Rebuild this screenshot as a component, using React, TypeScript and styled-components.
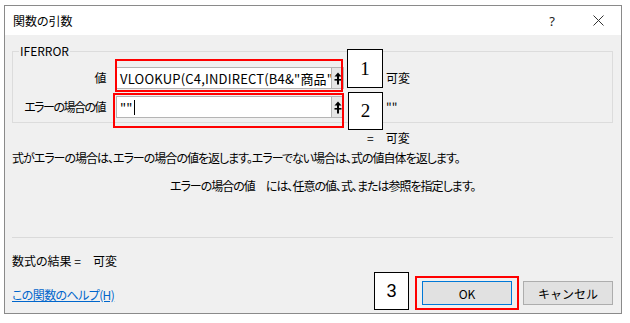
import React from 'react';
import styled, {createGlobalStyle} from 'styled-components';

const GlobalStyle = createGlobalStyle`
  html, body {
    margin: 0;
    padding: 0;
    background: #ffffff;
  }
  body {
    font-family: "Noto Sans CJK JP", "Noto Sans", sans-serif;
    font-size: 12px;
    color: #000000;
    font-feature-settings: "palt";
  }
`;

const Stage = styled.div`
  position: relative;
  width: 630px;
  height: 323px;
  overflow: hidden;
`;

const Window = styled.div`
  box-sizing: border-box;
  width: 618px;
  height: 309px;
  margin: 5px 0 0 4px;
  border: 1px solid #8a8a8a;
  background: #f0f0f0;
  display: flex;
  flex-direction: column;
`;

const TitleBar = styled.div`
  height: 29px;
  flex: none;
  background: #ffffff;
  display: flex;
  align-items: center;
  padding-left: 8px;
`;

const TitleText = styled.div`
  flex: 1;
  font-size: 12px;
  line-height: 14px;
`;

const TitleButton = styled.div`
  width: 46px;
  height: 29px;
  display: flex;
  align-items: center;
  justify-content: center;
  font-family: "Noto Sans", sans-serif;
  font-size: 13px;
  color: #222;
`;

const Body = styled.div`
  flex: 1;
  display: flex;
  flex-direction: column;
  padding: 0 8px 0 7px;
`;

const GroupBox = styled.div`
  position: relative;
  margin-top: 16px;
  height: 72px;
  box-sizing: border-box;
  border: 1px solid #dcdcdc;
  padding: 15px 0 4px;
  display: flex;
  flex-direction: column;
  gap: 7px;
`;

const GroupTitle = styled.div`
  position: absolute;
  top: -8px;
  left: 6px;
  padding: 0 1px;
  background: #f0f0f0;
  line-height: 14px;
`;

const ArgRow = styled.div`
  display: flex;
  align-items: center;
  height: 22px;
`;

const ArgLabel = styled.div`
  width: 92px;
  flex: none;
  display: flex;
  justify-content: flex-end;
  white-space: nowrap;
  margin-right: 11px;
  line-height: 14px;
  letter-spacing: -1.5px;
`;

const ArgInput = styled.div`
  box-sizing: border-box;
  width: 216px;
  height: 22px;
  background: #ffffff;
  border: 1px solid #b4b4b4;
  padding: 0 3px;
  display: flex;
  align-items: center;
  overflow: hidden;
  white-space: nowrap;
  font-size: 13px;
  letter-spacing: 0.2px;
`;

const Caret = styled.span`
  display: inline-block;
  width: 1px;
  height: 15px;
  background: #000;
  margin-left: 1px;
`;

const CollapseButton = styled.div`
  box-sizing: border-box;
  width: 12px;
  height: 22px;
  background: #e6e6e6;
  border: 1px solid #b4b4b4;
  border-left: none;
  display: flex;
  align-items: center;
  justify-content: center;
`;

const ArgValue = styled.div`
  margin-left: 42px;
  line-height: 14px;
`;

const ResultLine = styled.div`
  margin-top: 8px;
  padding-left: 355px;
  display: flex;
  gap: 12px;
  line-height: 14px;
`;

const Description = styled.div<{indent?: number; top: number}>`
  margin-top: ${p => p.top}px;
  padding-left: ${p => p.indent ?? 0}px;
  line-height: 14px;
  white-space: nowrap;
  letter-spacing: -1px;
`;

const Separator = styled.div`
  margin-top: 44px;
  height: 1px;
  background: #dadada;
`;

const FormulaResult = styled.div`
  margin-top: 16px;
  line-height: 14px;
`;

const Footer = styled.div`
  margin-top: 13px;
  display: flex;
  align-items: center;
`;

const HelpLink = styled.a`
  color: #0066cc;
  text-decoration: underline;
  line-height: 14px;
  margin-top: 4px;
  letter-spacing: -0.6px;
`;

const DialogButton = styled.button<{primary?: boolean}>`
  box-sizing: border-box;
  width: 90px;
  height: 24px;
  margin-left: ${p => (p.primary ? 'auto' : '11px')};
  background: #e1e1e1;
  border: 1px solid ${p => (p.primary ? '#0078d7' : '#adadad')};
  font-family: "Noto Sans CJK JP", "Noto Sans", sans-serif;
  font-size: 12px;
  color: #000;
  padding: 0;
`;

const Highlight = styled.div<{x: number; y: number; w: number; h: number}>`
  position: absolute;
  left: ${p => p.x}px;
  top: ${p => p.y}px;
  width: ${p => p.w}px;
  height: ${p => p.h}px;
  box-sizing: border-box;
  border: 2px solid #ff0000;
  pointer-events: none;
`;

const Callout = styled.div<{x: number; y: number; w: number; h: number; serif?: boolean}>`
  position: absolute;
  left: ${p => p.x}px;
  top: ${p => p.y}px;
  width: ${p => p.w}px;
  height: ${p => p.h}px;
  box-sizing: border-box;
  border: 1px solid #000;
  background: #ffffff;
  display: flex;
  align-items: center;
  justify-content: center;
  font-family: ${p => (p.serif ? '"Liberation Serif", serif' : '"Liberation Sans", sans-serif')};
  font-size: ${p => (p.serif ? 19 : 18)}px;
  color: #000;
`;

const CollapseIcon = () => (
  <svg width="8" height="13" viewBox="0 0 8 13">
    <path d="M4 0.5 L7.5 4.5 L0.5 4.5 Z" fill="#000" />
    <rect x="3" y="4" width="2" height="8.5" fill="#000" />
    <rect x="0.5" y="7" width="7" height="1.6" fill="#000" />
  </svg>
);

export default function App() {
  return (
    <Stage>
      <GlobalStyle />
      <Window>
        <TitleBar>
          <TitleText>関数の引数</TitleText>
          <TitleButton>?</TitleButton>
          <TitleButton>
            <svg width="11" height="11" viewBox="0 0 11 11">
              <path d="M0.5 0.5 L10.5 10.5 M10.5 0.5 L0.5 10.5" stroke="#333" strokeWidth="1" />
            </svg>
          </TitleButton>
        </TitleBar>
        <Body>
          <GroupBox>
            <GroupTitle>IFERROR</GroupTitle>
            <ArgRow>
              <ArgLabel>値</ArgLabel>
              <ArgInput>VLOOKUP(C4,INDIRECT(B4&amp;"商品"),2,FALSE)</ArgInput>
              <CollapseButton><CollapseIcon /></CollapseButton>
              <ArgValue>可変</ArgValue>
            </ArgRow>
            <ArgRow>
              <ArgLabel>エラーの場合の値</ArgLabel>
              <ArgInput>""<Caret /></ArgInput>
              <CollapseButton><CollapseIcon /></CollapseButton>
              <ArgValue>""</ArgValue>
            </ArgRow>
          </GroupBox>
          <ResultLine>
            <span>=</span>
            <span>可変</span>
          </ResultLine>
          <Description top={6}>
            式がエラーの場合は、エラーの場合の値を返します。エラーでない場合は、式の値自体を返します。
          </Description>
          <Description top={14} indent={158}>
            エラーの場合の値　には、任意の値、式、または参照を指定します。
          </Description>
          <Separator />
          <FormulaResult>数式の結果 =　可変</FormulaResult>
          <Footer>
            <HelpLink href="#">この関数のヘルプ(H)</HelpLink>
            <DialogButton primary>OK</DialogButton>
            <DialogButton>キャンセル</DialogButton>
          </Footer>
        </Body>
      </Window>
      <Highlight x={115} y={59} w={228} h={33} />
      <Highlight x={113} y={93} w={231} h={35} />
      <Highlight x={415} y={276} w={104} h={34} />
      <Callout x={347} y={49} w={36} h={39} serif>1</Callout>
      <Callout x={348} y={92} w={35} h={38} serif>2</Callout>
      <Callout x={374} y={272} w={35} h={38}>3</Callout>
    </Stage>
  );
}
